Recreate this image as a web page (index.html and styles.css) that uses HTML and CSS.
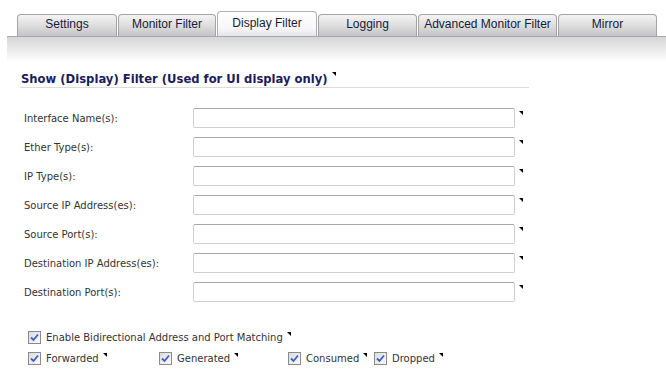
FILE: index.html
```html
<!DOCTYPE html>
<html lang="en">
<head>
    <meta charset="UTF-8">
    <title>Display Filter</title>
    <link rel="stylesheet" href="styles.css">
</head>
<body>
    <div class="tabs">
        <div class="tab w100">Settings</div>
        <div class="tab w98">Monitor Filter</div>
        <div class="tab active w100">Display Filter</div>
        <div class="tab w99">Logging</div>
        <div class="tab w139">Advanced Monitor Filter</div>
        <div class="tab w99">Mirror</div>
    </div>
    <div class="band"></div>

    <div class="content">
        <div class="section-title">Show (Display) Filter (Used for UI display only)<span class="mark"></span></div>

        <div class="form">
            <label>Interface Name(s):</label><input type="text"><span class="mark"></span>
            <label>Ether Type(s):</label><input type="text"><span class="mark"></span>
            <label>IP Type(s):</label><input type="text"><span class="mark"></span>
            <label>Source IP Address(es):</label><input type="text"><span class="mark"></span>
            <label>Source Port(s):</label><input type="text"><span class="mark"></span>
            <label>Destination IP Address(es):</label><input type="text"><span class="mark"></span>
            <label>Destination Port(s):</label><input type="text"><span class="mark"></span>
        </div>

        <div class="checks">
            <div class="check-row">
                <span class="check"><span class="box"><svg width="9" height="9" viewBox="0 0 9 9"><path d="M1 4.5 L3.5 7 L8 1.5" fill="none" stroke="#3a5fc8" stroke-width="1.8"/></svg></span>Enable Bidirectional Address and Port Matching<span class="mark"></span></span>
            </div>
            <div class="check-row">
                <span class="check c1"><span class="box"><svg width="9" height="9" viewBox="0 0 9 9"><path d="M1 4.5 L3.5 7 L8 1.5" fill="none" stroke="#3a5fc8" stroke-width="1.8"/></svg></span>Forwarded<span class="mark"></span></span>
                <span class="check c2"><span class="box"><svg width="9" height="9" viewBox="0 0 9 9"><path d="M1 4.5 L3.5 7 L8 1.5" fill="none" stroke="#3a5fc8" stroke-width="1.8"/></svg></span>Generated<span class="mark"></span></span>
                <span class="check c3"><span class="box"><svg width="9" height="9" viewBox="0 0 9 9"><path d="M1 4.5 L3.5 7 L8 1.5" fill="none" stroke="#3a5fc8" stroke-width="1.8"/></svg></span>Consumed<span class="mark"></span></span>
                <span class="check"><span class="box"><svg width="9" height="9" viewBox="0 0 9 9"><path d="M1 4.5 L3.5 7 L8 1.5" fill="none" stroke="#3a5fc8" stroke-width="1.8"/></svg></span>Dropped<span class="mark"></span></span>
            </div>
        </div>
    </div>
</body>
</html>
```

FILE: styles.css
```css
body {
    margin: 0;
    background: #fff;
    font-family: "DejaVu Sans", Tahoma, sans-serif;
    font-size: 10px;
    color: #333;
}

.tabs {
    display: flex;
    align-items: flex-end;
    gap: 1px;
    padding-left: 17px;
    height: 36px;
}

.tab {
    box-sizing: border-box;
    height: 22px;
    border: 1px solid #a4a4a4;
    border-bottom: none;
    border-radius: 4px 4px 0 0;
    background: linear-gradient(#f4f4f4, #d9d9d9 60%, #c4c4c4);
    font-family: "Liberation Sans", Arial, sans-serif;
    font-size: 12px;
    color: #1a1a3a;
    text-align: center;
    line-height: 19px;
}

.tab.active {
    height: 25px;
    background: linear-gradient(#ffffff, #f6f6f8 70%, #e4e4ee);
    line-height: 22px;
    border-color: #b0b0b0;
}

.w98 { width: 98px; }
.w99 { width: 99px; }
.w100 { width: 100px; }
.w139 { width: 139px; }

.band {
    margin-left: 7px;
    height: 25px;
    border-top: 1px solid #a8a8b4;
    background: linear-gradient(#d6d6d6, #ffffff);
}

.content {
    padding-left: 20px;
}

.section-title {
    width: 508px;
    margin-top: 10px;
    padding-left: 1px;
    font-family: "DejaVu Sans", Verdana, sans-serif;
    font-weight: bold;
    font-size: 11.6px;
    line-height: 14px;
    color: #1c1c5c;
    border-bottom: 1px solid #dcdcdc;
    padding-bottom: 1px;
}

.mark {
    display: inline-block;
    width: 0;
    height: 0;
    border-top: 4px solid #000;
    border-left: 4px solid transparent;
    margin-left: 4px;
    vertical-align: top;
}

.form {
    display: grid;
    grid-template-columns: 173px 322px auto;
    row-gap: 9px;
    align-items: center;
    margin-top: 20px;
}

.form label {
    padding-left: 4px;
}

.form input {
    box-sizing: border-box;
    width: 322px;
    height: 20px;
    margin: 0;
    border: 1px solid #cfcfcf;
    border-top-color: #a9a9a9;
    border-radius: 2px;
    background: #fff;
}

.form .mark {
    align-self: start;
    margin-top: 3px;
}

.checks {
    margin-top: 25px;
    padding-left: 8px;
}

.check-row {
    display: flex;
    height: 21px;
    align-items: center;
}

.check {
    display: flex;
    align-items: center;
}

.check .mark {
    align-self: flex-start;
    margin-top: 1px;
}

.c1 { width: 131px; }
.c2 { width: 129px; }
.c3 { width: 86px; }

.box {
    box-sizing: border-box;
    width: 13px;
    height: 13px;
    margin-right: 5px;
    border: 1px solid #8a8a8a;
    background: linear-gradient(135deg, #dcdcdc, #fafafa);
    display: flex;
    align-items: center;
    justify-content: center;
}
```
